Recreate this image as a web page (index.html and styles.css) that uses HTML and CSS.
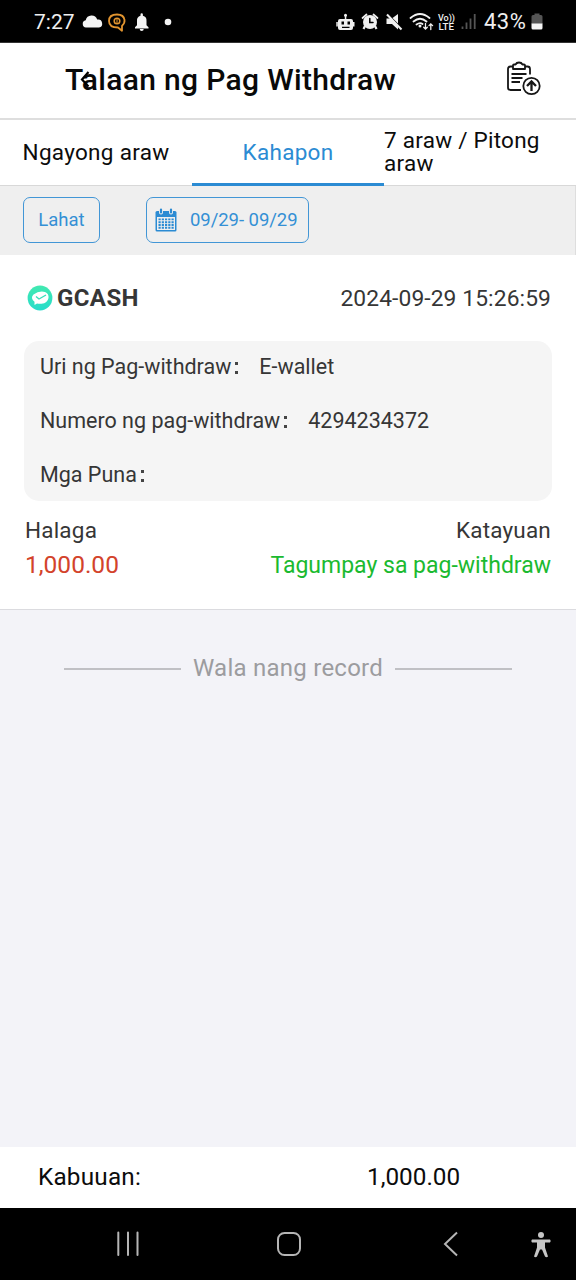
FILE: index.html
```html
<!DOCTYPE html>
<html lang="fil">
<head>
<meta charset="utf-8">
<title>Talaan ng Pag Withdraw</title>
<link rel="stylesheet" href="styles.css">
</head>
<body>
<div class="statusbar">
  <span class="clock">7:27</span>
  <svg class="notices" width="100" height="24" viewBox="0 0 100 24">
    <path d="M5 17.500a3.700 3.700 0 0 1-.3-7.300 6 6 0 0 1 11.500-.6 4 4 0 0 1 1.800 7.900z" fill="#f4f4f4"/>
    <path d="M41 15.800Q44 13 43.500 10C43 6 40 4.500 36 4.500S28 6 28 11s4 6.500 9 6.500l4 3.300z" fill="none" stroke="#e2942f" stroke-width="1.800" stroke-linejoin="round"/>
    <circle cx="36" cy="11" r="2.800" fill="none" stroke="#e2942f" stroke-width="1.500"/>
    <path d="M36 8v6" stroke="#e2942f" stroke-width="1"/>
    <path d="M54 18.500v-1.300l2-2V11a5 5 0 0 1 3.500-5.200V4.500a1.200 1.200 0 0 1 2.400 0v1.300A5 5 0 0 1 65.500 11v4.200l2 2v1.300zM58.700 19h4a2 2 0 0 1-4 0z" fill="#f4f4f4"/>
    <circle cx="87" cy="12" r="3.300" fill="#f4f4f4"/>
  </svg>
  <svg class="signals" width="141" height="24" viewBox="335 10 141 24">
    <g fill="#f0f0f0">
      <path fill-rule="evenodd" d="M340 19h11a2 2 0 0 1 2 2v7a2 2 0 0 1-2 2h-11a2 2 0 0 1-2-2v-7a2 2 0 0 1 2-2zm1.500 2.500v3h2.500v-3zm6 0v3h2.500v-3zm-5.500 5.200v1.200h7.500v-1.200z"/>
      <path d="M344.800 15h1.500v4h-1.500zM336.300 22h1.500v4.500h-1.500zM353 22h1.500v4.500h-1.500z"/>
      <circle cx="345.500" cy="15.200" r="1.500"/>
      <circle cx="370" cy="22" r="7"/>
      <path d="M365 26l-1.500 3M375 26l1.500 3" stroke="#f0f0f0" stroke-width="2.200"/>
    </g>
    <g fill="none" stroke="#f0f0f0" stroke-width="1.700" stroke-linecap="round">
      <path d="M362.500 18l4-3.500M377.500 18l-4-3.500"/>
      <path d="M369.800 18.500v4h3.200" stroke="#000" stroke-width="1.500"/>
      <path d="M410.500 18Q420 10 429.500 18M413.500 21.500Q420 16 426.500 21.500M416.500 24.500Q420 22 422.500 24" stroke-width="1.800"/>
      <path d="M425.500 23.500v5.500M423.700 27.300l1.800 1.800 1.800-1.800M430.800 29.500V24M429 25.600l1.800-1.800 1.800 1.800" stroke-width="1.300"/>
    </g>
    <circle cx="420" cy="26" r="1.500" fill="#f0f0f0"/>
    <path d="M392.500 18L398 14v9.500zM386.500 18.500h4L398 26v3.500l-6-5.500h-5.500z" fill="#f0f0f0"/>
    <path d="M387 14.500L401.500 29.500" stroke="#f0f0f0" stroke-width="2"/>
    <text class="volte" x="438" y="20.500" textLength="17" lengthAdjust="spacingAndGlyphs">Vo))</text>
    <text class="volte" x="438.500" y="30" textLength="15.500" lengthAdjust="spacingAndGlyphs">LTE</text>
    <path d="M462.500 26.500V29M466.500 22.500V29M470.500 18.500V29M474.700 14V29" stroke="#555" stroke-width="1.800"/>
  </svg>
  <span class="percent">43%</span>
  <svg class="battery" width="12" height="18" viewBox="0 0 12 18">
    <path d="M3.500 2V.500h5V2H10q1.500 0 1.500 1.500V11H.500V3.500Q.500 2 2 2z" fill="#555"/>
    <path d="M.500 10.500h11V15q0 1.500-1.500 1.500H2Q.500 16.500.500 15z" fill="#f4f4f4"/>
  </svg>
</div>
<header class="header">
  <div class="title"><span class="title-text">Talaan ng Pag Withdraw</span>
    <svg class="back" width="12" height="20" viewBox="0 0 12 20"><path d="M9.500 2L3 9.500l6.500 7" fill="none" stroke="#000" stroke-width="2.200"/></svg>
  </div>
  <svg class="record-icon" width="36" height="36" viewBox="0 0 36 36" fill="none" stroke="#161616" stroke-width="1.800">
    <path d="M7 5.500H4.500Q2 5.500 2 8v18.500Q2 29 4.500 29H15M19 5.500h2.500Q24 5.500 24 8v5.500"/>
    <path d="M7 8V4.500Q7 3.500 8 3.500h1.500Q10.500 1.500 13 1.500t3.500 2H18q1 0 1 1V8z" stroke-linejoin="round"/>
    <path d="M5.500 13h15M5.500 17h11M5.500 21h8.500" stroke-width="2"/>
    <circle cx="25.500" cy="25" r="8.200"/>
    <path d="M25.500 30v-9M21 25l4.500-4.500L30 25" stroke-width="2.300"/>
  </svg>
</header>
<nav class="tabs">
  <div class="tab"><span class="t1">Ngayong araw</span></div>
  <div class="tab active"><span class="t2">Kahapon</span></div>
  <div class="tab"><span class="t3">7 araw / Pitong araw</span></div>
</nav>
<div class="filters">
  <div class="btn all"><span>Lahat</span></div>
  <div class="btn date">
    <svg width="22" height="24" viewBox="0 0 22 24">
      <path d="M2 3h18q1.500 0 1.500 1.500V22q0 1.500-1.500 1.500H2Q.500 23.500.500 22V4.500Q.500 3 2 3z" fill="#2b8bd3"/>
      <path d="M2 9h18V22H2z" fill="#efefef"/>
      <path d="M6 1v3.500M16 1v3.500" stroke="#efefef" stroke-width="4" stroke-linecap="round"/>
      <path d="M6 1.500v3M16 1.500v3" stroke="#2b8bd3" stroke-width="2.200" stroke-linecap="round"/>
      <path d="M3.500 11.400h15.500M3.500 14.200h15.500M3.500 17h15.500M3.500 19.800h15.500" stroke="#2b8bd3" stroke-width="1.900" stroke-dasharray="2.200 1.050"/>
    </svg>
    <span>09/29- 09/29</span>
  </div>
</div>
<main class="list">
  <article class="card">
    <div class="row top">
      <svg width="26" height="26" viewBox="0 0 26 26">
        <defs><linearGradient id="mint" x1="0" y1="0" x2="0" y2="1"><stop offset="0" stop-color="#42e9b0"/><stop offset="1" stop-color="#27dccb"/></linearGradient></defs>
        <circle cx="13" cy="13" r="12.400" fill="url(#mint)"/>
        <path d="M6.500 9.500Q12 5.500 18 7q4 1.500 3.500 6-1 5-7 5.800-3 .2-4.500-.3L7.500 20v-3.200Q3 13 6.500 9.500z" fill="#fff"/>
        <path d="M9 11.500l3 2.500 7-4" fill="none" stroke="#38dfb9" stroke-width="1.400"/>
      </svg>
      <span class="brand">GCASH</span>
      <time class="stamp">2024-09-29 15:26:59</time>
    </div>
    <div class="details">
      <div class="line"><span class="k1">Uri ng Pag-withdraw</span><i class="colon"></i><span class="v1">E-wallet</span></div>
      <div class="line"><span class="k2">Numero ng pag-withdraw</span><i class="colon"></i><span class="v2">4294234372</span></div>
      <div class="line"><span class="k3">Mga Puna</span><i class="colon"></i></div>
    </div>
    <div class="row labels"><span class="l1">Halaga</span><span class="l2">Katayuan</span></div>
    <div class="row values"><span class="amount">1,000.00</span><span class="status">Tagumpay sa pag-withdraw</span></div>
  </article>
  <div class="end"><span class="rule"></span><span class="endtext">Wala nang record</span><span class="rule"></span></div>
</main>
<footer class="total"><span class="sumlabel">Kabuuan:</span><span class="sum">1,000.00</span></footer>
<div class="navbar">
  <svg width="576" height="72" viewBox="0 0 576 72" fill="none" stroke="#b5b5b5" stroke-width="2">
    <path d="M118.300 24.500v22.500M128 24.500v22.500M137.500 24.500v22.500" stroke-linecap="round"/>
    <rect x="278" y="25" width="22" height="22" rx="6.500"/>
    <path d="M457 24.500L445 36l12 11.500"/>
    <g fill="#c5c5c5" stroke="none">
      <circle cx="541" cy="27" r="3"/>
      <path d="M532 31.500h18q1.500 1.500 0 3h-5v5l3 9q-1.500 1.500-3 0l-3-7h-2l-3 7q-1.500 1.500-3 0l3-9v-5h-5q-1.500-1.500 0-3z"/>
    </g>
  </svg>
</div>
</body>
</html>
```
FILE: styles.css
```css
* { box-sizing: border-box; }
body { margin: 0; width: 576px; height: 1280px; display: flex; flex-direction: column; overflow: hidden; background: #f3f3f8; color: #0c0c0c; font-family: Roboto, "Liberation Sans", sans-serif; font-size: 22px; line-height: 1; }
svg { display: block; flex: none; }
span, time { white-space: nowrap; }
.statusbar { flex: none; height: 43px; border-bottom: 1px solid #333; padding: 2px 0 0 34px; background: #000; color: #efefef; display: flex; align-items: center; }
.clock { width: 47px; font-size: 21px; }
.notices { margin-right: 154px; }
.signals { margin-right: 8px; }
.volte { font: 500 9.500px Roboto, sans-serif; fill: #f0f0f0; }
.percent { width: 47px; font-size: 22px; letter-spacing: .5px; }
.header { flex: none; height: 77px; padding: 0 34px 2px 65px; display: flex; align-items: center; justify-content: space-between; background: #fff; border-bottom: 2px solid #dedede; }
.title { position: relative; padding-top: 1px; font-size: 30px; font-weight: 500; letter-spacing: .34px; color: #090909; }
.back { position: absolute; left: 14px; top: 6px; }
.record-icon { margin-bottom: 2px; }
.tabs { flex: none; height: 66px; display: grid; grid-template-columns: repeat(3, 192px); background: #fff; border-bottom: 1px solid #d8d8d8; }
.tab { height: 66px; padding-bottom: 1px; display: flex; align-items: center; justify-content: center; font-size: 22.500px; letter-spacing: .3px; }
.active { color: #2b8bd3; border-bottom: 3px solid #2b8bd3; padding: 2px 0 0; }
.t3 { white-space: normal; line-height: 23px; letter-spacing: .25px; margin-top: -1px; }
.filters { flex: none; height: 69px; padding: 11px 0 0 23px; display: flex; gap: 46px; background: #efefef; border-right: 1px solid #dedede; }
.btn { height: 46px; border: 1.500px solid #4296d6; border-radius: 7px; color: #3490d5; display: flex; align-items: center; font-size: 18.500px; }
.all { width: 77px; padding-top: 1px; justify-content: center; }
.date { width: 163px; padding-left: 8px; gap: 13px; letter-spacing: -.05px; }
.list { flex: 1; }
.card { height: 355px; padding: 30px 24px 0; background: #fff; border-bottom: 1px solid #dbdbdf; color: #363636; }
.row { display: flex; align-items: center; }
.top { height: 26px; padding: 0 1px 0 3px; }
.brand { margin-left: 4px; font-size: 24px; font-weight: 700; letter-spacing: .4px; }
.stamp { margin-left: auto; font-size: 22.800px; letter-spacing: .1px; padding-top: 2px; }
.details { height: 160px; margin-top: 30px; padding: 0 16px; border-radius: 15px; background: #f5f5f5; font-size: 21.500px; }
.line { height: 54px; padding-bottom: 2px; display: flex; align-items: center; }
.colon { width: 3px; height: 12px; margin: 2px 0 0 4px; border-top: 3px solid #444; border-bottom: 3px solid #444; }
.v1, .v2 { margin-left: 21px; }
.labels, .values { padding: 0 1px; justify-content: space-between; }
.labels { height: 34px; margin-top: 12px; font-size: 22.500px; letter-spacing: .2px; }
.values { height: 36px; font-size: 23px; }
.amount { font-size: 24.500px; color: #d3432b; }
.status { color: #1bba30; }
.end { height: 60px; margin-top: 29px; display: flex; align-items: center; justify-content: center; gap: 12px; color: #9c9c9f; font-size: 24px; letter-spacing: .25px; }
.endtext { margin-top: -2px; }
.rule { width: 117px; height: 2px; background: #c0c0c4; }
.total { flex: none; height: 61px; padding: 0 0 0 38px; display: flex; align-items: center; background: #fff; font-size: 24.300px; }
.sumlabel { width: 329px; letter-spacing: .2px; }
.navbar { flex: none; height: 72px; background: #000; }
```
